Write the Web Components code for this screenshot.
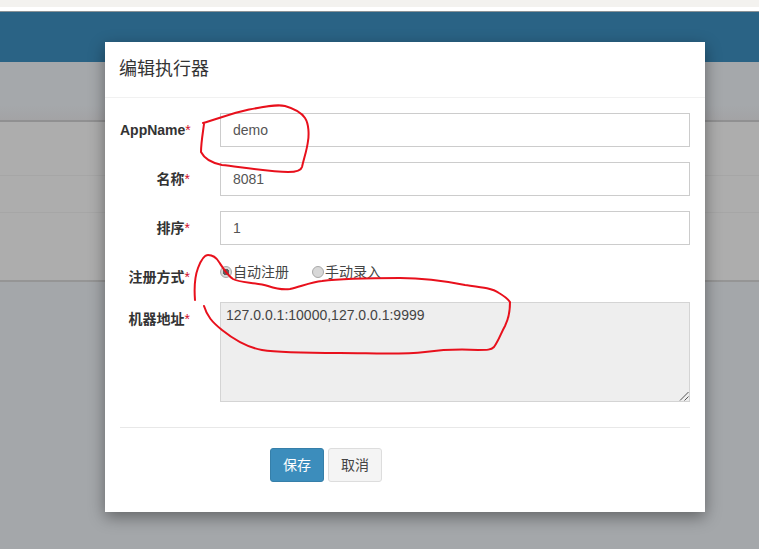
<!DOCTYPE html>
<html lang="zh">
<head>
<meta charset="utf-8">
<title>编辑执行器</title>
<style>
  html, body { margin: 0; height: 100%; background: #a4a7aa; }
  body { overflow: hidden; font: 14px "Liberation Sans", "Noto Sans CJK SC", sans-serif; color: #333; }
</style>
</head>
<body>

<template id="page-backdrop-tpl">
  <style>
    :host { display: block; height: 549px; background: #a4a7aa; }
    .browser { height: 7px; background: #f3f2ef; }
    .gap { height: 4px; background: #fff; }
    .rule { height: 1px; background: #8a9296; }
    .nav { height: 50px; background: #2a6385; }
    .head { height: 58px; background: linear-gradient(#a5a8ab 75%, #a3a3a5); }
    .table { height: 162px; background: #adadad; border-top: 2px solid #909091; border-bottom: 2px solid #959595; box-sizing: border-box; display: grid; grid-template-rows: 53px 37px 1fr; }
    .table div + div { border-top: 1px solid #a6a6a6; }
  </style>
  <div class="browser"></div>
  <div class="gap"></div>
  <div class="rule"></div>
  <div class="nav"></div>
  <div class="head"></div>
  <div class="table"><div></div><div></div><div></div></div>
  <slot></slot>
</template>

<template id="edit-modal-tpl">
  <style>
    :host { display: block; position: absolute; left: 105px; top: 42px; width: 600px; height: 470px; background: #fff; box-shadow: 0 5px 15px rgba(0,0,0,.4); }
    header { height: 56px; box-sizing: border-box; padding: 15px 15px 0 14px; border-bottom: 1px solid #f1f1f1; font-size: 18px; line-height: 25px; color: #333; }
    .body { padding: 15px 15px 0; display: flex; flex-direction: column; }
    .actions { margin-top: 25px; border-top: 1px solid #e8e8e8; padding: 20px 0 0 150px; display: flex; gap: 4px; }
  </style>
  <header><slot name="title"></slot></header>
  <div class="body">
    <slot></slot>
    <div class="actions"><slot name="actions"></slot></div>
  </div>
</template>

<template id="form-row-tpl">
  <style>
    :host { display: grid; grid-template-columns: 70px 470px; column-gap: 30px; margin-bottom: 15px; }
    label { text-align: right; font-weight: 700; line-height: 20px; padding-top: 7px; color: #333; white-space: nowrap; }
    i { font-style: normal; font-weight: 400; color: #d0102a; }
  </style>
  <label><span id="text"></span><i>*</i></label>
  <div><slot></slot></div>
</template>

<template id="text-box-tpl">
  <style>
    :host { display: block; height: 34px; box-sizing: border-box; border: 1px solid #ccc; padding: 6px 12px; line-height: 20px; color: #555; background: #fff; }
  </style>
  <slot></slot>
</template>

<template id="area-box-tpl">
  <style>
    :host { display: block; height: 100px; box-sizing: border-box; border: 1px solid #d4d4d4; padding: 2px 5px; line-height: 20px; color: #444; background: #eee; position: relative; }
    svg { position: absolute; right: 0; bottom: 0; }
  </style>
  <slot></slot>
  <svg width="10" height="10" viewBox="0 0 10 10" fill="none" stroke="#555" stroke-width="1"><path d="M1 9.5 9.5 1M5.5 9.5 9.5 5.5"/></svg>
</template>

<template id="radio-choice-tpl">
  <style>
    :host { display: inline-flex; align-items: center; line-height: 20px; color: #444; }
    input { appearance: none; -webkit-appearance: none; box-sizing: border-box; margin: 0 1px 0 0; width: 12px; height: 12px; border-radius: 50%; border: 1px solid #a9a9a9; background: #d8d8d8; }
    input:checked { background: radial-gradient(circle, #5f5f5f 0 3px, #d8d8d8 3.5px); }
  </style>
  <input type="radio" disabled>
  <slot></slot>
</template>

<template id="action-button-tpl">
  <style>
    :host { display: block; width: 54px; height: 34px; box-sizing: border-box; border: 1px solid #ddd; border-radius: 3px; background: #f4f4f4; color: #444; text-align: center; line-height: 32px; }
    :host([primary]) { background: #3c8dbc; border-color: #367fa9; color: #fff; }
  </style>
  <slot></slot>
</template>

<page-backdrop>
  <edit-modal>
    <span slot="title">编辑执行器</span>
    <form-row label="AppName"><text-box>demo</text-box></form-row>
    <form-row label="名称"><text-box>8081</text-box></form-row>
    <form-row label="排序"><text-box>1</text-box></form-row>
    <form-row label="注册方式" style="height:27px">
      <div style="display:flex;gap:23px;height:20px;margin-top:2px">
        <radio-choice checked>自动注册</radio-choice>
        <radio-choice>手动录入</radio-choice>
      </div>
    </form-row>
    <form-row label="机器地址" style="margin-bottom:0"><area-box>127.0.0.1:10000,127.0.0.1:9999</area-box></form-row>
    <action-button slot="actions" primary>保存</action-button>
    <action-button slot="actions">取消</action-button>
  </edit-modal>
  <red-marks></red-marks>
</page-backdrop>

<script>
// small helper: every element here only clones its template into an open root
function plain(tag) {
  customElements.define(tag, class extends HTMLElement {
    constructor() {
      super();
      this.attachShadow({ mode: 'open' });
      this.shadowRoot.appendChild(document.getElementById(tag + '-tpl').content.cloneNode(true));
    }
  });
}

['page-backdrop', 'edit-modal', 'text-box', 'area-box', 'action-button'].forEach(plain);

class FormRow extends HTMLElement {
  constructor() {
    super();
    this.attachShadow({ mode: 'open' });
    this.shadowRoot.appendChild(document.getElementById('form-row-tpl').content.cloneNode(true));
  }
  connectedCallback() {
    this.shadowRoot.getElementById('text').textContent = this.getAttribute('label');
  }
}
customElements.define('form-row', FormRow);

class RadioChoice extends HTMLElement {
  constructor() {
    super();
    this.attachShadow({ mode: 'open' });
    this.shadowRoot.appendChild(document.getElementById('radio-choice-tpl').content.cloneNode(true));
  }
  connectedCallback() {
    this.shadowRoot.querySelector('input').checked = this.hasAttribute('checked');
  }
}
customElements.define('radio-choice', RadioChoice);

// hand-drawn annotations lying over the dialog
class RedMarks extends HTMLElement {
  constructor() {
    super();
    this.attachShadow({ mode: 'open' });
    this.shadowRoot.innerHTML = `
      <style>
        :host { display: block; position: absolute; left: 0; top: 0; width: 759px; height: 549px; pointer-events: none; }
        path { fill: none; stroke: #e8101c; stroke-width: 2; stroke-linecap: round; stroke-linejoin: round; }
      </style>
      <svg width="759" height="549">
        <path d="M203 123C215 120 232 113 247 110C262 107 276 104 285 106C292 108 301 112 305 118C309 124 309 135 308 141C307 150 304 158 302 167C301 171 296 172 288 172C270 172 240 167 222 165C212 163 204 158 201 152C201 143 203 132 204 124"/>
        <path d="M195 300C194 287 195 276 198 268C201 260 204 255 208 255C213 255 216 257 219 262C223 268 227 275 233 279C240 283 255 282 268 286C277 289 283 290 290 289C302 286 312 282 322 281C345 278 372 278 400 278C425 278 445 281 465 285C480 287 492 288 499 293C504 296 508 299 510 302C510 312 509 318 505 326C501 333 499 340 494 347C491 350 487 350 478 350C460 349 440 350 425 352C400 355 370 353 340 353C310 353 280 353 262 350C245 347 232 338 222 330C212 322 207 316 204 306"/>
      </svg>`;
  }
}
customElements.define('red-marks', RedMarks);
</script>
</body>
</html>
